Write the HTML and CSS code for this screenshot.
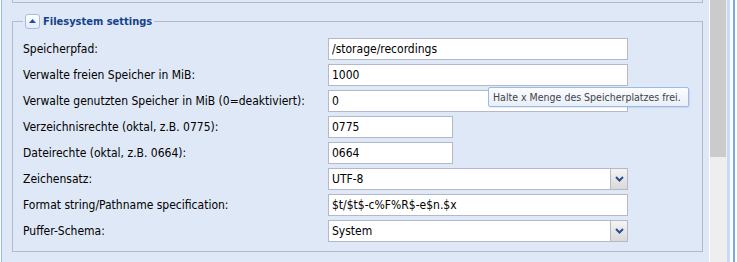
FILE: index.html
```html
<!DOCTYPE html>
<html>
  <head>
    <title>Filesystem settings</title>
    <link rel="stylesheet" href="styles.css">
  </head>
  <body>
    <div class="window">
      <div class="panel-body">
        <div class="prev-fieldset"></div>
        <fieldset class="fs">
          <legend>
            <span class="tool-toggle">
              <svg width="7" height="4" viewBox="0 0 7 4"><path d="M0 4 L3.5 0 L7 4 Z" fill="#1f4fa8"/></svg>
            </span>
            <span class="legend-text">Filesystem settings</span>
          </legend>

          <div class="row">
            <label>Speicherpfad:</label>
            <input class="text wide" type="text" value="/storage/recordings">
          </div>
          <div class="row">
            <label>Verwalte freien Speicher in MiB:</label>
            <input class="text wide" type="text" value="1000">
          </div>
          <div class="row">
            <label>Verwalte genutzten Speicher in MiB (0=deaktiviert):</label>
            <input class="text wide" type="text" value="0">
          </div>
          <div class="row">
            <label>Verzeichnisrechte (oktal, z.B. 0775):</label>
            <input class="text short" type="text" value="0775">
          </div>
          <div class="row">
            <label>Dateirechte (oktal, z.B. 0664):</label>
            <input class="text short" type="text" value="0664">
          </div>
          <div class="row">
            <label>Zeichensatz:</label>
            <div class="combo">
              <input class="text" type="text" value="UTF-8">
              <span class="trigger">
                <svg width="9" height="6" viewBox="0 0 9 6"><path d="M1 1 L4.5 4.5 L8 1" fill="none" stroke="#2a4f95" stroke-width="2"/></svg>
              </span>
            </div>
          </div>
          <div class="row">
            <label>Format string/Pathname specification:</label>
            <input class="text wide" type="text" value="$t/$t$-c%F%R$-e$n.$x">
          </div>
          <div class="row">
            <label>Puffer-Schema:</label>
            <div class="combo">
              <input class="text" type="text" value="System">
              <span class="trigger">
                <svg width="9" height="6" viewBox="0 0 9 6"><path d="M1 1 L4.5 4.5 L8 1" fill="none" stroke="#2a4f95" stroke-width="2"/></svg>
              </span>
            </div>
          </div>
        </fieldset>
      </div>
      <div class="scrollbar"><div class="thumb"></div></div>
      <div class="edge"></div>
    </div>

    <div class="tooltip">Halte x Menge des Speicherplatzes frei.</div>
  </body>
</html>
```

FILE: styles.css
```css
body {
  margin: 0;
  background-color: #fff;
  font-family: "DejaVu Sans Condensed", "DejaVu Sans", sans-serif;
  font-size: 12px;
  color: #000;
}
.window {
  display: flex;
  height: 262px;
  overflow: hidden;
}
.panel-body {
  width: 696px;
  margin-left: 1px;
  border-left: 1px solid #99bbe8;
  padding: 0 5px 0 10px;
  background-color: #dfe8f6;
}
.prev-fieldset {
  width: 689px;
  height: 2px;
  border: 1px solid #b5b8c8;
  border-top: none;
}
.fs {
  margin: 10px 0 0 0;
  padding: 9px 10px 5px 10px;
  width: 691px;
  box-sizing: border-box;
  border: 1px solid #b5b8c8;
}
.fs legend {
  padding: 0 2px;
  margin-left: 0;
  display: flex;
  align-items: center;
  height: 16px;
}
.tool-toggle {
  width: 13px;
  height: 13px;
  border: 1px solid #a3bde3;
  border-radius: 3px;
  background: linear-gradient(#ffffff, #e3ecf8);
  display: flex;
  align-items: center;
  justify-content: center;
  margin-right: 3px;
}
.legend-text {
  font-weight: bold;
  font-size: 11px;
  color: #15428b;
}
.row {
  display: flex;
  align-items: center;
  height: 22px;
  margin-bottom: 4px;
}
.row label {
  width: 305px;
  flex-shrink: 0;
}
.text {
  box-sizing: border-box;
  height: 22px;
  padding: 1px 3px;
  border: 1px solid #b5b8c8;
  background: #fff;
  font-family: inherit;
  font-size: 12px;
  color: #000;
  outline: none;
}
.text.wide {
  width: 300px;
}
.text.short {
  width: 125px;
}
.combo {
  display: flex;
  width: 300px;
}
.combo .text {
  width: 283px;
}
.trigger {
  box-sizing: border-box;
  width: 17px;
  height: 22px;
  border: 1px solid #b5b8c8;
  border-left: none;
  background: linear-gradient(#f4f4f4, #d9d9d9);
  display: flex;
  align-items: center;
  justify-content: center;
}
.scrollbar {
  width: 17px;
  border-left: 1px solid #fff;
  background-color: #eeeeee;
}
.thumb {
  width: 16px;
  height: 157px;
  background-color: #cbcbcb;
}
.edge {
  width: 10px;
  background: linear-gradient(to right, #c9dbf2 0 3px, #fff 3px 6px, #7aa8e3 6px 8px, #fff 8px);
}
.tooltip {
  position: absolute;
  left: 488px;
  top: 87px;
  width: 201px;
  height: 20px;
  box-sizing: border-box;
  padding: 3px 4px;
  border: 1px solid #99bbe8;
  border-radius: 2px;
  background: linear-gradient(#fbfcfe, #e8eff9);
  color: #444;
  font-size: 10.5px;
  white-space: nowrap;
  box-shadow: 1px 1px 1px rgba(0, 0, 0, 0.08);
}
```
